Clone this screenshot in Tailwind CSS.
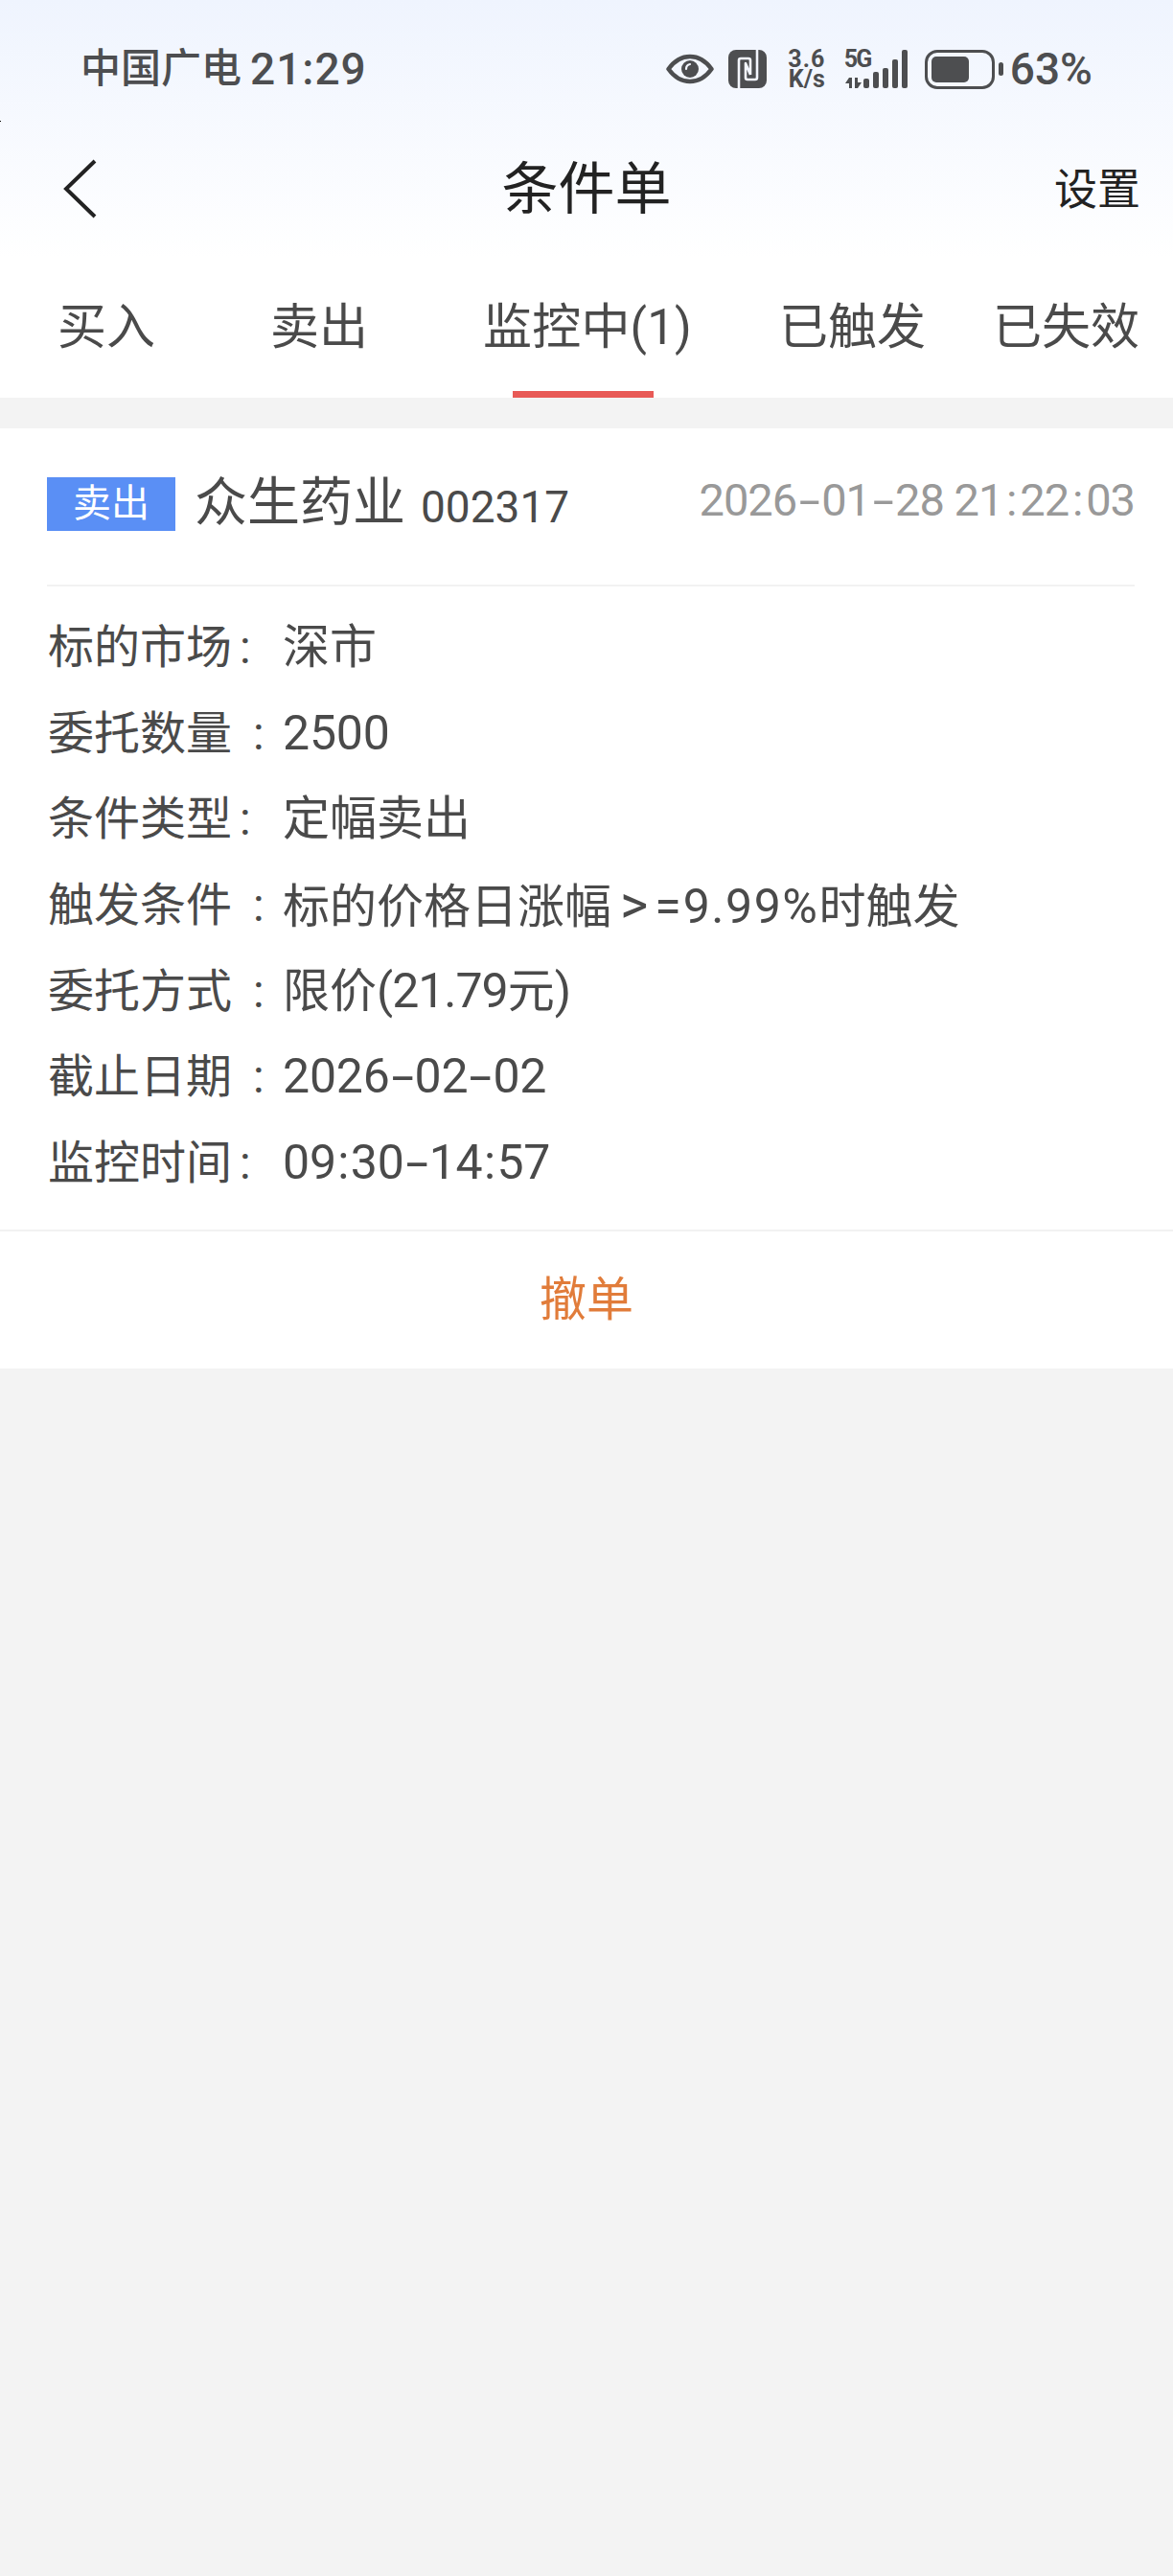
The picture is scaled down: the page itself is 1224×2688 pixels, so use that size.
<!DOCTYPE html>
<html lang="zh-CN">

<head>
  <meta charset="UTF-8">
  <meta name="viewport" content="width=device-width, initial-scale=1.0">
  <title>条件单</title>
  <script src="https://cdn.jsdelivr.net/npm/@tailwindcss/browser@4"></script>
</head>

<body class="relative min-h-screen bg-[#f3f3f3] font-['Roboto','Noto_Sans_CJK_SC',sans-serif] text-[#4a4a4a]">
  <div class="absolute left-0 top-[126px] h-px w-px bg-black"></div>

  <!-- Header -->
  <header class="bg-[linear-gradient(#eff4fe,#ffffff_270px)]">
    <!-- Status bar -->
    <div class="flex h-[144px] items-center justify-between pl-[84px] pr-[84px] text-[#4d4e50]">
      <div class="flex items-center font-medium">
        <span class="text-[42px] leading-none">中国广电</span>
        <span class="ml-[9px] text-[46px] leading-none tracking-[1px]">21:29</span>
      </div>
      <div class="flex items-center">
        <svg class="h-[32px] w-[50px]" viewBox="0 0 50 32" fill="none">
          <path d="M2.5 16C9 7 16 3 25 3s16 4 22.5 13C41 25 34 29 25 29S9 25 2.5 16Z" stroke="#4d4e50" stroke-width="4.5" stroke-linejoin="round" />
          <circle cx="25" cy="16" r="9" fill="#4d4e50" />
          <path d="M21 16c0-3 1.500-4.500 4-5" stroke="#f3f6fe" stroke-width="2.200" stroke-linecap="round" />
        </svg>
        <svg class="ml-[15px] h-[40px] w-[40px]" viewBox="0 0 40 40" fill="none">
          <rect width="40" height="40" rx="8" fill="#4d4e50" />
          <path d="M11 40V11q0-2 2-2h8q2 0 2 2v15M30 0v29q0 2-2 2h-8q-2 0-2-2V14l5 12" stroke="#f3f6fe" stroke-width="2.600" stroke-linejoin="round" />
        </svg>
        <div class="ml-[21px] flex w-[42px] flex-col items-center font-bold">
          <span class="h-[21px] text-[25px] leading-[21px] tracking-[1px]">3.6</span>
          <span class="h-[21px] text-[25px] leading-[21px]">K/s</span>
        </div>
        <div class="relative ml-[18px] h-[40px] w-[66px]">
          <span class="absolute left-0 top-[-1px] text-[25px] font-bold leading-[22px] tracking-[-2px]">5G</span>
          <svg class="h-[40px] w-[66px]" viewBox="0 0 66 40" fill="#4d4e50">
            <polygon points="1,35 5,29 8,29 8,40 5,40 5,35" />
            <polygon points="11,29 14,29 14,34 18,34 14,40 11,40" />
            <rect x="20" y="30" width="6" height="10" rx="2" />
            <rect x="30" y="23" width="6" height="17" rx="2" />
            <rect x="40" y="19" width="6" height="21" rx="2" />
            <rect x="50" y="10" width="6" height="30" rx="2" />
            <rect x="60" y="0" width="6" height="40" rx="2" />
          </svg>
        </div>
        <div class="ml-[18px] flex h-[41px] w-[73px] items-center rounded-[13px] border-[3px] border-[#4d4e50] p-[4px]">
          <div class="h-full w-[39px] rounded-[5px] bg-[#4d4e50]"></div>
        </div>
        <div class="ml-[4px] h-[14px] w-[5px] rounded-full bg-[#4d4e50]"></div>
        <span class="ml-[7px] text-[46px] font-medium leading-none">63%</span>
      </div>
    </div>

    <!-- Title bar -->
    <div class="relative flex h-[106px] items-center justify-center">
      <svg class="absolute left-[66px] top-[22px] h-[62px] w-[36px]" viewBox="0 0 36 62" fill="none">
        <path d="M33 2 3 31l30 29" stroke="#222222" stroke-width="4" />
      </svg>
      <h1 class="text-[59px] font-normal leading-none text-[#222222]">条件单</h1>
      <span class="absolute right-[34px] top-[32px] text-[45px] leading-none text-[#222222]">设置</span>
    </div>

    <!-- Tabs -->
    <nav class="flex h-[165px] pl-[60px] pt-[67px] text-[51px] leading-[50px]">
      <a class="w-[222px]">买入</a>
      <a class="w-[222px]">卖出</a>
      <a class="relative w-[309px] tracking-[0.2px]">监控中(1)
        <span class="absolute left-[31px] top-[91px] h-[7px] w-[147px] bg-[#e85a56]"></span>
      </a>
      <a class="w-[223px]">已触发</a>
      <a>已失效</a>
    </nav>
  </header>

  <!-- Order card -->
  <main class="mt-[32px] bg-white">
    <div class="ml-[49px] mr-[40px] flex h-[165px] items-center border-b-2 border-[#f2f2f2] pb-[5px]">
      <span class="flex h-[56px] w-[134px] items-center justify-center bg-[#5a8ff5] text-[40px] leading-none text-white">卖出</span>
      <span class="mb-[4px] ml-[20px] text-[55px] leading-none">众生药业</span>
      <span class="ml-[16px] mt-[5px] text-[46px] leading-none">002317</span>
      <span class="mb-[9px] ml-auto text-[47px] leading-none tracking-[-1px] text-[#999999]">2026<span class="inline-block w-[26px] scale-x-[1.7] text-center">-</span>01<span class="inline-block w-[26px] scale-x-[1.7] text-center">-</span>28 21<span class="inline-block w-[18px] text-center">:</span>22<span class="inline-block w-[18px] text-center">:</span>03</span>
    </div>

    <div class="px-[50px] pb-[24px] pt-[19px] text-[48px] leading-[89.7px]">
      <div class="flex h-[89.7px]"><span class="w-[245px]">标的市场<span class="ml-[8px]">:</span></span><span class="text-[49px]">深市</span></div>
      <div class="flex h-[89.7px]"><span class="w-[245px]">委托数量<span class="ml-[22px]">:</span></span><span class="text-[50px] tracking-[-0.2px]">2500</span></div>
      <div class="flex h-[89.7px]"><span class="w-[245px]">条件类型<span class="ml-[8px]">:</span></span><span class="text-[49px]">定幅卖出</span></div>
      <div class="flex h-[89.7px]"><span class="w-[245px]">触发条件<span class="ml-[22px]">:</span></span><span class="text-[49px]">标的价格日涨幅<span class="ml-[9px] text-[56px]">&gt;</span><span class="ml-[7px] text-[50px]">=</span><span class="ml-[2px] text-[50px] tracking-[1.5px]">9.99%</span>时触发</span></div>
      <div class="flex h-[89.7px]"><span class="w-[245px]">委托方式<span class="ml-[22px]">:</span></span><span class="text-[49px]">限价<span class="text-[50px] tracking-[-1px]">(21.79</span>元<span class="text-[50px]">)</span></span></div>
      <div class="flex h-[89.7px]"><span class="w-[245px]">截止日期<span class="ml-[22px]">:</span></span><span class="text-[50px] tracking-[-0.2px]">2026<span class="inline-block w-[26px] scale-x-[1.7] text-center">-</span>02<span class="inline-block w-[26px] scale-x-[1.7] text-center">-</span>02</span></div>
      <div class="flex h-[89.7px]"><span class="w-[245px]">监控时间<span class="ml-[8px]">:</span></span><span class="text-[50px] tracking-[-0.2px]">09<span class="inline-block w-[15px] text-center">:</span>30<span class="inline-block w-[26px] scale-x-[1.7] text-center">-</span>14<span class="inline-block w-[15px] text-center">:</span>57</span></div>
    </div>

    <div class="flex h-[145px] items-center justify-center border-t-2 border-[#f2f2f2] text-[49px] leading-none text-[#e17c3a]">撤单</div>
  </main>
</body>

</html>
